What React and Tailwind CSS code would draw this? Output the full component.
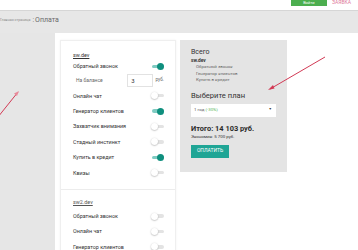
import React from 'react';

function Toggle({ on }) {
  return (
    <div className="relative w-[13px] h-[8px] flex items-center">
      <div className={`w-[12px] h-[3.5px] rounded-full ml-[0.5px] ${on ? 'bg-[#7fcbc2]' : 'bg-[#e3e3e3]'}`} />
      {on ? (
        <div className="absolute right-0 top-[0.5px] w-[7px] h-[7px] rounded-full bg-[#0f8f7e]" />
      ) : (
        <div className="absolute left-0 top-[0.5px] w-[7px] h-[7px] rounded-full bg-white shadow-[0_0.5px_1.5px_rgba(0,0,0,0.35)]" />
      )}
    </div>
  );
}

function Row({ label, on }) {
  return (
    <div className="h-[15.4px] flex items-center justify-between">
      <span className="text-[5.4px] text-[#333]">{label}</span>
      <Toggle on={on} />
    </div>
  );
}

const first = [
  ['Онлайн чат', false],
  ['Генератор клиентов', true],
  ['Захватчик внимания', false],
  ['Стадный инстинкт', false],
  ['Купить в кредит', true],
  ['Квизы', false],
];

const second = [
  ['Обратный звонок', false],
  ['Онлайн чат', false],
  ['Генератор клиентов', false],
];

export default function App() {
  return (
    <div className="relative w-[358px] h-[250px] overflow-hidden bg-white" style={{ fontFamily: 'Roboto, "Noto Sans", sans-serif' }}>
      {/* Header */}
      <div className="h-[11px] bg-white border-b border-[#d6d6d6] flex items-start justify-end">
        <div className="w-[36px] h-[6px] bg-[#4cae4f] mr-[5px] flex items-center justify-center">
          <span className="text-[4px] leading-none text-white">Войти</span>
        </div>
        <span className="text-[5px] leading-none text-[#e07a9a] whitespace-nowrap w-[26px] overflow-hidden">ЗАЯВКА</span>
      </div>

      {/* Breadcrumb band */}
      <div className="h-[22px] bg-[#e7e7e7] flex items-center pb-[3px]">
        <span className="text-[3.6px] text-[#8a8a8a] whitespace-nowrap">Главная страница</span>
        <span className="text-[7px] text-[#777] ml-[2px] mr-[1px]">:</span>
        <span className="text-[7px] text-[#6a6a6a]">Оплата</span>
      </div>

      {/* Body */}
      <div className="flex h-[217px]">
        <div className="w-[55px] bg-[#e6e6e6]" />
        <div className="flex-1 bg-white flex items-start pl-[5px] pt-[7px] gap-[4px]">
          {/* Services card */}
          <div className="w-[116px] border border-[#efefef] shadow-[0_0_2px_rgba(0,0,0,0.06)]">
            <div className="pl-[12px] pr-[11px] pt-[9px] pb-[9px]">
              <div className="h-[10px] flex items-center">
                <span className="text-[5.4px] text-[#333] underline">sw.dev</span>
              </div>
              <div className="h-[13px] flex items-center justify-between">
                <span className="text-[5.4px] text-[#333]">Обратный звонок</span>
                <Toggle on />
              </div>
              <div className="h-[15px] flex items-center">
                <span className="text-[5px] text-[#666] ml-[3px] w-[58px]">На балансе</span>
                <div className="w-[28px] h-[13px] border border-[#e2e2e2] flex items-center pl-[3px]">
                  <span className="text-[6px] text-[#333]">3</span>
                </div>
                <span className="text-[4.6px] text-[#666] ml-[3px]">руб.</span>
              </div>
              {first.map(([l, on]) => (
                <Row key={l} label={l} on={on} />
              ))}
            </div>
            <div className="border-t border-[#ececec] pl-[12px] pr-[11px] pt-[7px] pb-[6px]">
              <div className="h-[10px] flex items-center">
                <span className="text-[5.4px] text-[#555] underline">sw2.dev</span>
              </div>
              <div className="pt-[1px]">
                {second.map(([l, on]) => (
                  <Row key={l} label={l} on={on} />
                ))}
              </div>
            </div>
          </div>

          {/* Summary */}
          <div className="w-[107px] h-[132px] bg-[#e4e4e4] pl-[11px] pr-[11px] pt-[8px] flex flex-col">
            <div className="text-[7px] leading-[8px] text-[#333]">Всего</div>
            <div className="text-[4.8px] leading-[6px] font-bold text-[#333] mt-[2px]">sw.dev</div>
            <div className="pl-[5px] text-[4.4px] leading-[6.5px] text-[#666]">
              <div>Обратный звонок</div>
              <div>Генератор клиентов</div>
              <div>Купить в кредит</div>
            </div>
            <div className="text-[7.6px] leading-[9px] text-[#333] mt-[7px]">Выберите план</div>
            <div className="mt-[4px] h-[13px] bg-white flex items-center justify-between pl-[3px] pr-[4px]">
              <span className="text-[4.4px] text-[#555]">
                1 год <span className="text-[#5cb85c]">(-30%)</span>
              </span>
              <span className="text-[3.5px] text-[#444]">▼</span>
            </div>
            <div className="text-[7.4px] leading-[9px] font-bold text-[#2a2a2a] mt-[7px]">Итого: 14 103 руб.</div>
            <div className="text-[4.4px] leading-[6px] text-[#333] mt-[1px]">Экономия: 5 700 руб.</div>
            <div className="mt-[5px] w-[38px] h-[13px] bg-[#1fa595] flex items-center justify-center">
              <span className="text-[5px] text-white">ОПЛАТИТЬ</span>
            </div>
          </div>
        </div>
      </div>

      {/* Annotation arrows */}
      <svg className="absolute inset-0 pointer-events-none" width="358" height="250" viewBox="0 0 358 250">
        <line x1="325" y1="57" x2="270" y2="89" stroke="#d23a55" strokeWidth="1" />
        <path d="M268 90 L273 85 L274.5 88.5 Z" fill="#d23a55" />
        <line x1="18" y1="92" x2="-2" y2="117" stroke="#d23a55" strokeWidth="1" />
        <path d="M19 91 L14 93.5 L17 96 Z" fill="#e88a9a" />
      </svg>
    </div>
  );
}
